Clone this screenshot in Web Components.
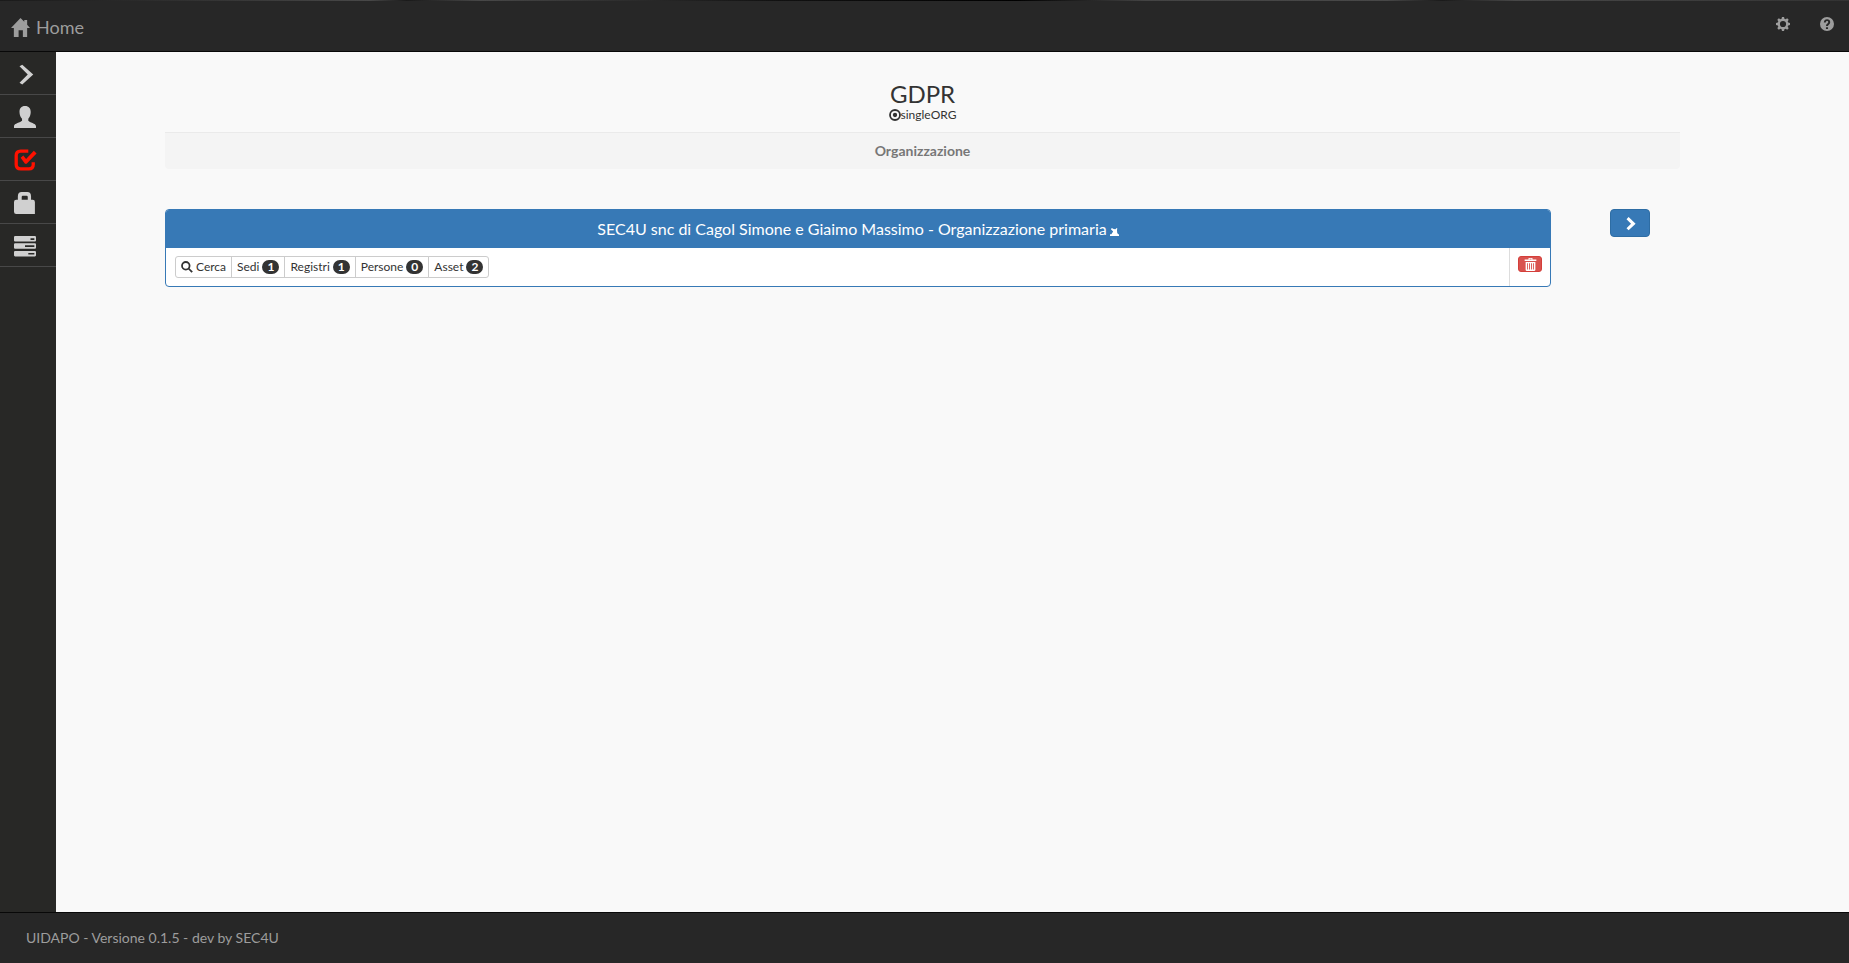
<!DOCTYPE html>
<html lang="it">
<head>
<meta charset="utf-8">
<title>UIDAPO</title>
<style>
html, body { height: 100%; margin: 0; }
body { font: 14px/20px Lato, "Liberation Sans", sans-serif; color: #333; background: #f9f9f9; }
</style>
</head>
<body>
<app-shell>
  <nav-bar slot="top"></nav-bar>
  <side-menu slot="side"></side-menu>
  <page-heading name="GDPR" mode="singleORG">Organizzazione</page-heading>
  <org-row>
    <org-panel>
      <span slot="title">SEC4U snc di Cagol Simone e Giaimo Massimo - Organizzazione primaria</span>
      <count-button icon="search">Cerca</count-button>
      <count-button count="1">Sedi</count-button>
      <count-button count="1">Registri</count-button>
      <count-button count="0">Persone</count-button>
      <count-button count="2">Asset</count-button>
    </org-panel>
  </org-row>
  <app-footer slot="bottom">UIDAPO - Versione 0.1.5 - dev by SEC4U</app-footer>
</app-shell>
<script>
const ICONS = {
  home: '<path d="M10 0 14 4V2H17V7L20 10.500H17V20H12.500V13H8V20H3V10.500H0Z"/>',
  next: '<path d="M5 3 7.500 1.500 17.500 10.500 7.500 19.500 5 18 12.500 10.500Z"/>',
  user: '<path d="M10 0C13.500 0 15.200 2.300 15.200 5.500 15.200 8 14.200 10.500 13 11.600V13.500C14 15 20 15.800 20 18.500V20H0V18.500C0 15.800 6 15 7.300 13.500V11.600C6 10.500 5 8 5 5.500 5 2.300 6.500 0 10 0Z"/>',
  check: '<path fill="none" stroke="currentColor" stroke-width="3" d="M13 2H6Q2 2 2 6V14Q2 18 6 18H13.500Q17.500 18 17.500 14V12"/><path d="M6 8 8.500 6 11 9 18 1.500 20.500 4 11.500 13.500H10Z"/>',
  lock: '<path fill-rule="evenodd" d="M3.500 7V4Q3.500 0 7 0H12Q15.500 0 15.500 4V7H17Q19 7 19 9V20H2Q0 20 0 18V9Q0 7 2 7ZM7 7H12.500V4.500Q12.500 3.500 11.500 3.500H8Q7 3.500 7 4.500Z"/>',
  tasks: '<path fill-rule="evenodd" d="M1 1H19Q20 1 20 2V5Q20 6 19 6H1Q0 6 0 5V2Q0 1 1 1ZM15 3V4.500H18.500V3ZM1 7.500H19Q20 7.500 20 8.500V11.500Q20 12.500 19 12.500H1Q0 12.500 0 11.500V8.500Q0 7.500 1 7.500ZM10 9.300V10.800H18.500V9.300ZM1 14.500H19Q20 14.500 20 15.500V18.500Q20 19.500 19 19.500H1Q0 19.500 0 18.500V15.500Q0 14.500 1 14.500ZM13 16.300V17.800H18.500V16.300Z"/>',
  cog: '<path fill-rule="evenodd" d="M8.500 0H11.500L12 2.600 13.700 3.300 16 1.900 18.100 4 16.700 6.300 17.400 8 20 8.500V11.500L17.400 12 16.700 13.700 18.100 16 16 18.100 13.700 16.700 12 17.400 11.500 20H8.500L8 17.400 6.300 16.700 4 18.100 1.900 16 3.300 13.700 2.600 12 0 11.500V8.500L2.600 8 3.300 6.300 1.900 4 4 1.900 6.300 3.300 8 2.600ZM10 5.600A4.400 4.400 0 1 0 10 14.400 4.400 4.400 0 1 0 10 5.600Z"/>',
  help: '<path fill-rule="evenodd" d="M10 0A10 10 0 1 1 10 20 10 10 0 1 1 10 0ZM8.500 14.500V17H11.500V14.500ZM5.500 8H8.300C8.300 6.500 9 5.800 10.100 5.800S11.800 6.500 11.800 7.400C11.800 9 8.600 9.400 8.600 12.500V13H11.400C11.400 11 14.600 10.300 14.600 7.400 14.600 4.700 12.700 3.300 10.100 3.300S5.500 5 5.500 8Z"/>',
  target: '<circle cx="10" cy="10" r="8.300" fill="none" stroke="currentColor" stroke-width="3"/><circle cx="10" cy="10" r="3.600"/>',
  search: '<circle cx="8" cy="8" r="6.300" fill="none" stroke="currentColor" stroke-width="3"/><path d="M11.500 13.500 13.500 11.500 19.700 17.500 17.500 19.700Z"/>',
  forward: '<path d="M5 4.500 8 1.500 18 11 8 20.500 5 17.500 11.500 11Z"/>',
  trash: '<path fill-rule="evenodd" d="M7 0H13V2.300H19V4.500H1V2.300H7ZM8.500 1.200V2.300H11.500V1.200ZM2.500 6H17.500V18Q17.500 20 15.500 20H4.500Q2.500 20 2.500 18ZM4.800 8V17.500H6.200V8ZM7.800 8V17.500H9.200V8ZM10.800 8V17.500H12.200V8ZM13.800 8V17.500H15.200V8Z"/>',
  save: '<path d="M0 16H3L7 10 2 5 4 2 8 4.500 12 5 15 2 16.500 4 15.500 6 16 13 18 16H20V20H0Z"/>'
};
const make = (name, html, setup) => customElements.define(name, class extends HTMLElement {
  constructor() {
    super();
    const t = document.createElement('template');
    t.innerHTML = html;
    this.attachShadow({ mode: 'open' }).append(t.content.cloneNode(true));
  }
  connectedCallback() { if (setup) setup(this, this.shadowRoot); }
});

make('app-icon', `<style>:host{display:inline-flex;width:var(--size,20px);height:var(--size,20px);flex:none}svg{width:100%;height:100%;fill:currentColor;overflow:visible}</style><svg viewBox="0 0 20 20" aria-hidden="true"></svg>`,
  (el, root) => { root.querySelector('svg').innerHTML = ICONS[el.getAttribute('name')]; });

make('app-shell', `<style>
:host{display:grid;grid-template:auto 1fr auto / 56px 1fr;min-height:100vh}
.top,.bottom{grid-column:1 / -1}
.side{background:#282826;display:grid}
main{padding:29px 169px 0 109px}
</style>
<div class="top"><slot name="top"></slot></div>
<div class="side"><slot name="side"></slot></div>
<main><slot></slot></main>
<div class="bottom"><slot name="bottom"></slot></div>`);

make('nav-bar', `<style>
:host{display:flex;justify-content:space-between;align-items:center;height:51px;background:linear-gradient(90deg,#1a1a1a,#484848 20%,#1a1a1a 22%,#484848 26%,#111 42%,#000 55%,#444 62%,#484848 75%,#1a1a1a 78%,#484848 82%,#333) top / 100% 1px no-repeat #272727;border-bottom:1px solid #080808;color:#9d9d9d}
a{color:inherit;text-decoration:none}
.brand{display:flex;align-items:center;gap:6px;padding:3px 0 0 11px;font-size:18px}
.brand app-icon{--size:19px}
nav{display:flex;gap:30px;padding:0 15px 3px 0}
nav a{display:flex}
nav app-icon{--size:14px}
</style>
<a class="brand" href="#"><app-icon name="home"></app-icon><span>Home</span></a>
<nav><a href="#" aria-label="Impostazioni"><app-icon name="cog"></app-icon></a><a href="#" aria-label="Aiuto"><app-icon name="help"></app-icon></a></nav>`);

make('side-menu', `<style>
:host{display:block;color:#d0d0d0}
a{box-sizing:border-box;display:flex;align-items:center;height:43px;padding:2px 0 0 14px;border-bottom:1px solid #484848;color:inherit}
app-icon{--size:22px}
.on{color:#f10}
</style>
<nav><a href="#" aria-label="Espandi"><app-icon name="next"></app-icon></a><a href="#" aria-label="Utente"><app-icon name="user"></app-icon></a><a class="on" href="#" aria-label="GDPR"><app-icon name="check"></app-icon></a><a href="#" aria-label="Sicurezza"><app-icon name="lock"></app-icon></a><a href="#" aria-label="Attività"><app-icon name="tasks"></app-icon></a></nav>`);

make('page-heading', `<style>
:host{display:block;text-align:center}
h1{margin:0;font-size:24px;line-height:26px;font-weight:400}
.mode{display:flex;justify-content:center;align-items:center;font-size:12px;line-height:16px}
.mode app-icon{--size:12px}
h2{margin:9px 0 0;padding:8px 0;border-top:1px solid #eaeaea;border-radius:0 0 4px 4px;background:#f4f4f4;color:#777;font-size:14px;line-height:20px;font-weight:700}
</style>
<h1></h1><div class="mode"><app-icon name="target"></app-icon><span></span></div><h2><slot></slot></h2>`,
  (el, root) => {
    root.querySelector('h1').textContent = el.getAttribute('name');
    root.querySelector('.mode span').textContent = el.getAttribute('mode');
  });

make('org-row', `<style>
:host{display:flex;align-items:flex-start;gap:59px;margin-top:40px;padding-right:30px}
::slotted(*){flex:1}
button{box-sizing:border-box;display:flex;justify-content:center;align-items:center;width:40px;height:28px;padding:0;border:1px solid #2e6da4;border-radius:4px;background:#3779b6;color:#fff}
app-icon{--size:14px}
</style><slot></slot><button aria-label="Avanti"><app-icon name="forward"></app-icon></button>`);

make('org-panel', `<style>
:host{display:block;border:1px solid #3779b6;border-radius:4px;background:#fff;overflow:hidden}
header{display:flex;justify-content:center;align-items:center;gap:3px;height:38px;background:#3779b6;color:#fff;font-size:16px}
header app-icon{--size:9px;margin-top:4px}
.body{display:flex;justify-content:space-between;height:38px}
.group{display:flex;align-items:center;padding-left:9px}
.del{display:flex;align-items:flex-start;padding:8px 8px 0;border-left:1px solid #ddd}
.del button{box-sizing:border-box;display:flex;justify-content:center;align-items:center;width:24px;height:16px;padding:1px 0 0;border:1px solid #d43f3a;border-radius:3px;background:#d9534f;color:#fff}
.del app-icon{--size:13px}
</style>
<header><slot name="title"></slot><app-icon name="save"></app-icon></header>
<div class="body"><div class="group"><slot></slot></div><div class="del"><button aria-label="Elimina"><app-icon name="trash"></app-icon></button></div></div>`);

make('count-button', `<style>
:host{display:block;margin-right:-1px}
button{box-sizing:border-box;display:flex;align-items:center;gap:3px;height:22px;padding:0 5px;border:1px solid #ccc;background:#fff;color:#333;font:12px/18px Lato,"Liberation Sans",sans-serif}
:host(:first-of-type) button{border-radius:3px 0 0 3px}
:host(:last-of-type) button{border-radius:0 3px 3px 0}
app-icon{--size:12px}
b{padding:1px 5px;border-radius:10px;background:#333;color:#fff;font-size:12px;line-height:12px}
</style><button><slot></slot></button>`,
  (el, root) => {
    const button = root.querySelector('button');
    if (el.hasAttribute('icon')) {
      const icon = document.createElement('app-icon');
      icon.setAttribute('name', el.getAttribute('icon'));
      button.prepend(icon);
    }
    if (el.hasAttribute('count')) {
      const badge = document.createElement('b');
      badge.textContent = el.getAttribute('count');
      button.append(badge);
    }
  });

make('app-footer', `<style>
:host{display:block;padding:15px 26px;border-top:1px solid #080808;background:#272727;color:#9d9d9d}
</style><slot></slot>`);
</script>
</body>
</html>
